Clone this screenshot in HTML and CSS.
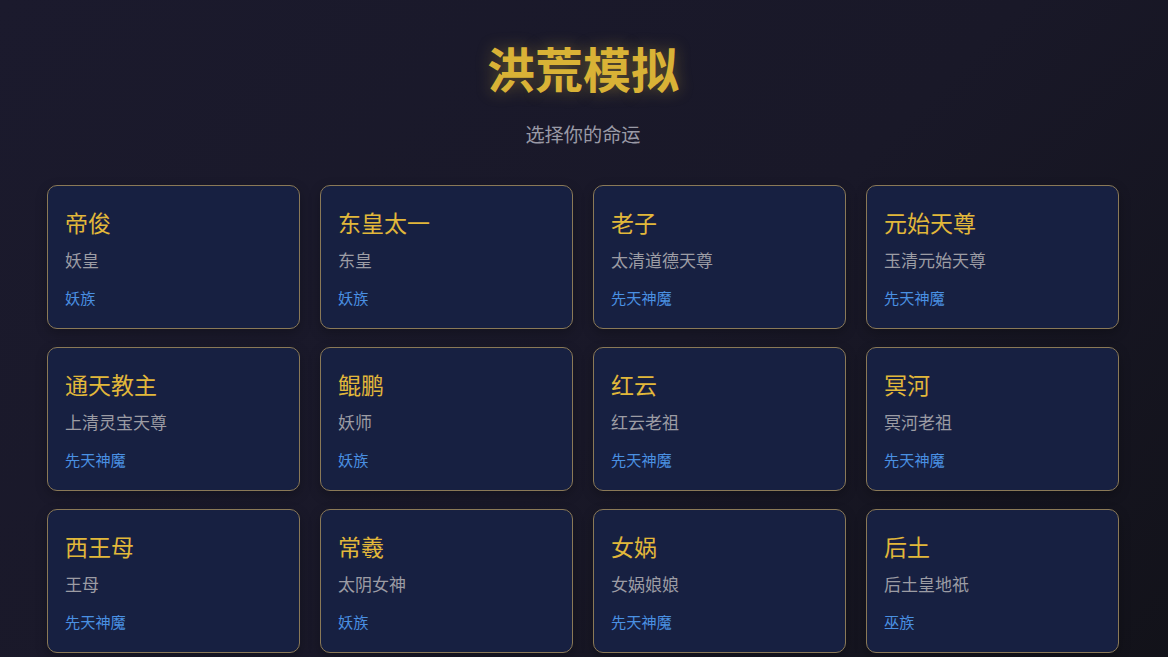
FILE: index.html
```html
<!DOCTYPE html>
<html lang="zh-CN">
<head>
<meta charset="utf-8">
<title>洪荒模拟</title>
<link rel="stylesheet" href="styles.css">
</head>
<body>
<div class="page">
  <header class="header">
    <h1 class="title">洪荒模拟</h1>
    <p class="subtitle">选择你的命运</p>
  </header>
  <main class="grid">
    <div class="card"><h3 class="name">帝俊</h3><p class="role">妖皇</p><span class="tag">妖族</span></div>
    <div class="card"><h3 class="name">东皇太一</h3><p class="role">东皇</p><span class="tag">妖族</span></div>
    <div class="card"><h3 class="name">老子</h3><p class="role">太清道德天尊</p><span class="tag">先天神魔</span></div>
    <div class="card"><h3 class="name">元始天尊</h3><p class="role">玉清元始天尊</p><span class="tag">先天神魔</span></div>
    <div class="card"><h3 class="name">通天教主</h3><p class="role">上清灵宝天尊</p><span class="tag">先天神魔</span></div>
    <div class="card"><h3 class="name">鲲鹏</h3><p class="role">妖师</p><span class="tag">妖族</span></div>
    <div class="card"><h3 class="name">红云</h3><p class="role">红云老祖</p><span class="tag">先天神魔</span></div>
    <div class="card"><h3 class="name">冥河</h3><p class="role">冥河老祖</p><span class="tag">先天神魔</span></div>
    <div class="card"><h3 class="name">西王母</h3><p class="role">王母</p><span class="tag">先天神魔</span></div>
    <div class="card"><h3 class="name">常羲</h3><p class="role">太阴女神</p><span class="tag">妖族</span></div>
    <div class="card"><h3 class="name">女娲</h3><p class="role">女娲娘娘</p><span class="tag">先天神魔</span></div>
    <div class="card"><h3 class="name">后土</h3><p class="role">后土皇地祇</p><span class="tag">巫族</span></div>
  </main>
</div>
</body>
</html>
```

FILE: styles.css
```css
html, body {
  margin: 0;
  padding: 0;
}
body {
  min-height: 100vh;
  background: linear-gradient(135deg, #1b1a2d 0%, #191828 55%, #121219 100%);
  font-family: "Noto Sans CJK SC", "Noto Sans", sans-serif;
  color: #ccc;
}
.page {
  padding: 38px 49px 40px 47px;
}
.header {
  text-align: center;
}
.title {
  margin: 0;
  font-size: 48px;
  line-height: 58px;
  font-weight: 700;
  color: #d9b236;
  text-shadow: 0 0 16px rgba(212, 175, 55, 0.4);
}
.subtitle {
  margin: 24px 0 37px;
  font-size: 19.2px;
  line-height: 28px;
  color: #9a9aa6;
}
.grid {
  display: grid;
  grid-template-columns: repeat(4, 1fr);
  gap: 18px 20px;
}
.card {
  display: flex;
  flex-direction: column;
  align-items: flex-start;
  background: #172041;
  border: 1px solid #8a7957;
  border-radius: 10px;
  padding: 20px 17px 21px;
  box-shadow: 0 4px 12px rgba(0, 0, 0, 0.25);
}
.name {
  margin: 0;
  font-size: 23px;
  line-height: 32px;
  font-weight: 400;
  color: #e2b83a;
}
.role {
  margin: 10px 0 0;
  font-size: 17px;
  line-height: 24px;
  color: #9c9ca4;
}
.tag {
  margin-top: 15px;
  font-size: 15.2px;
  line-height: 20px;
  color: #4a90e2;
}
```
